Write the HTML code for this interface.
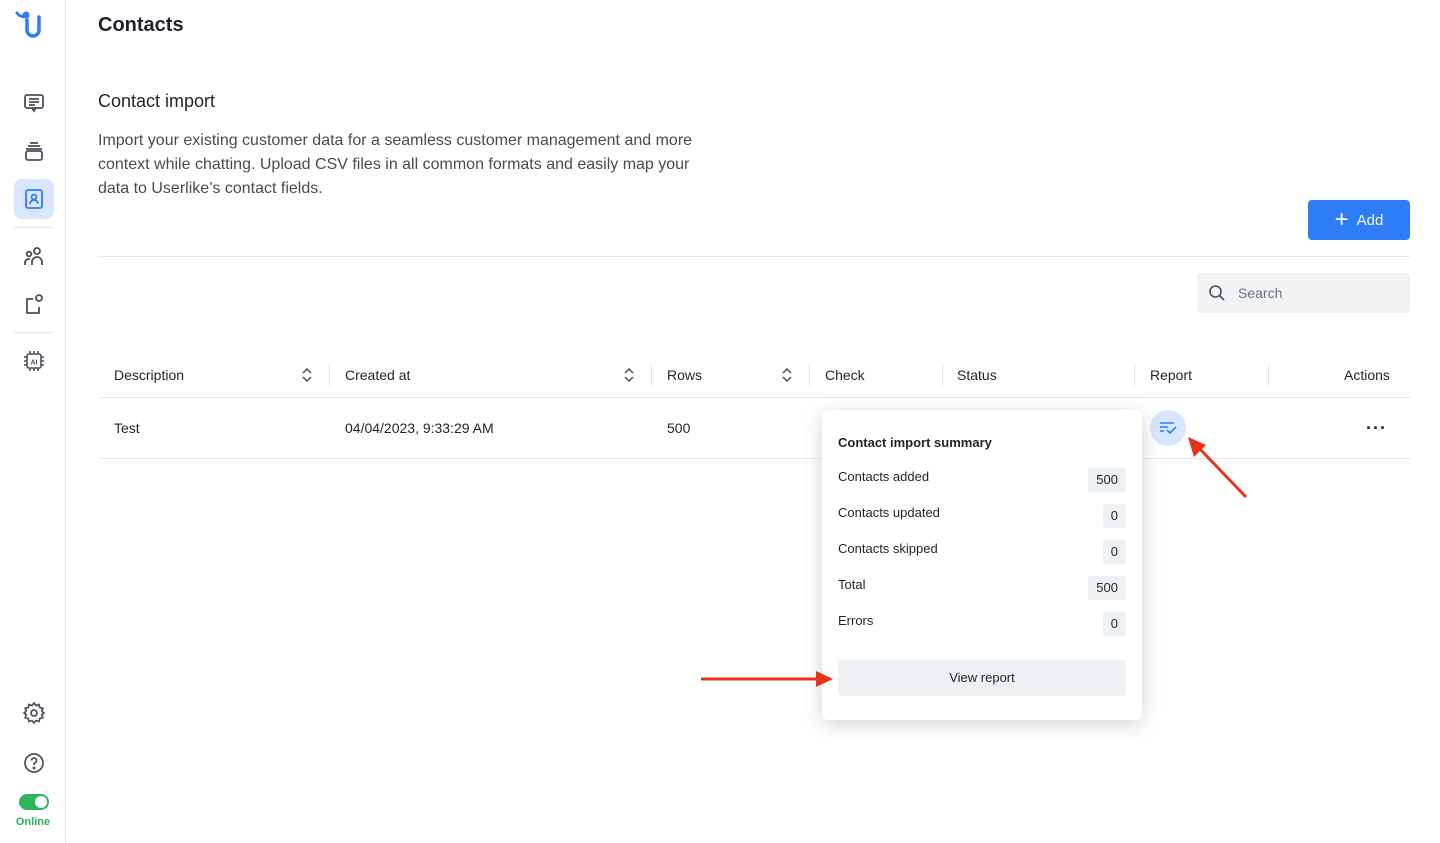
<!DOCTYPE html>
<html><head><style>
*{box-sizing:border-box;margin:0;padding:0}
body{width:1440px;height:843px;background:#fff;font-family:"Liberation Sans",sans-serif;color:#1f2329;position:relative;overflow:hidden}
.side{position:absolute;left:0;top:0;width:66px;height:843px;border-right:1px solid #e6e8eb;background:#fff}
.ic{position:absolute;left:14px;width:40px;height:40px;display:flex;align-items:center;justify-content:center}
.sep{position:absolute;left:14px;width:40px;height:1px;background:#e3e5e8}
.abs{position:absolute}
h1{position:absolute;left:98px;top:14px;font-size:20px;font-weight:bold;color:#1f2329}
h2{position:absolute;left:98px;top:91px;font-size:18px;font-weight:normal;color:#1f2329}
.desc{position:absolute;left:98px;top:129px;width:700px;font-size:16px;line-height:24px;color:#454b52}
.add{position:absolute;left:1308px;top:200px;width:102px;height:40px;background:#2e7cf6;border-radius:4px;color:#fff;font-size:15px;display:flex;align-items:center;justify-content:center;gap:8px}
.search{position:absolute;left:1197px;top:273px;width:213px;height:40px;background:#f0f2f4;border-radius:4px;color:#6b7178;font-size:14px;padding-left:41px;line-height:40px}
.th{position:absolute;top:367px;font-size:14px;color:#1f2329}
.vd{position:absolute;top:364px;width:1px;height:22px;background:#e3e5e8}
.hl{position:absolute;left:98px;width:1312px;height:1px;background:#e6e8eb}
.td{position:absolute;top:420px;font-size:14px;color:#1f2329}
.pop{position:absolute;left:822px;top:410px;width:320px;height:310px;background:#fff;border-radius:6px;box-shadow:0 4px 20px rgba(0,0,0,.18)}
.pop .r{position:absolute;left:16px;font-size:13px;color:#1f2329}
.badge{position:absolute;right:16px;height:24px;background:#eef1f4;border-radius:3px;font-size:13px;line-height:24px;padding:0 8px}
.vr{position:absolute;left:16px;top:250px;width:288px;height:36px;background:#eef1f4;border-radius:4px;font-size:13px;text-align:center;line-height:36px}
</style></head><body>
<div class="side">
 <svg class="abs" style="left:14px;top:10px" width="32" height="32" viewBox="0 0 32 32"><circle cx="12" cy="5" r="3.5" fill="#2e7cf6"/><path d="M3 3 Q7 8 12 6" stroke="#2e7cf6" stroke-width="3" fill="none" stroke-linecap="round"/><path d="M13 10 V20 a6 6 0 0 0 12 0 V7" stroke="#2e7cf6" stroke-width="3.5" fill="none" stroke-linecap="round"/></svg>
 <div class="ic" style="top:83px"><svg width="22" height="22" viewBox="0 0 22 22" fill="none" stroke="#4a5058" stroke-width="1.8"><rect x="2" y="3" width="18" height="13" rx="2"/><path d="M6 7h10M6 10h10M6 13h6M9 16l2 3 2-3"/></svg></div>
 <div class="ic" style="top:131px"><svg width="22" height="22" viewBox="0 0 22 22" fill="none" stroke="#4a5058" stroke-width="1.8"><path d="M7 3h8M5 6h12M3 9h16"/><rect x="3" y="11" width="16" height="9" rx="2"/></svg></div>
 <div class="ic" style="top:179px;background:#d8e7fd;border-radius:8px"><svg width="22" height="22" viewBox="0 0 22 22" fill="none" stroke="#2e7cf6" stroke-width="1.8"><rect x="3" y="2" width="16" height="18" rx="2"/><circle cx="11" cy="9" r="2.5"/><path d="M7 16a4 4 0 0 1 8 0"/></svg></div>
 <div class="sep" style="top:227px"></div>
 <div class="ic" style="top:236px"><svg width="22" height="22" viewBox="0 0 22 22" fill="none" stroke="#4a5058" stroke-width="1.8"><circle cx="14" cy="6" r="3"/><circle cx="6" cy="9" r="2.3"/><path d="M9 20v-3a5 5 0 0 1 10 0v3M2 20v-2a4 4 0 0 1 5-4"/></svg></div>
 <div class="ic" style="top:284px"><svg width="22" height="22" viewBox="0 0 22 22" fill="none" stroke="#4a5058" stroke-width="1.8"><path d="M10 6H4v14h12v-6"/><circle cx="16" cy="5" r="3"/></svg></div>
 <div class="sep" style="top:332px"></div>
 <div class="ic" style="top:341px"><svg width="22" height="22" viewBox="0 0 22 22" fill="none" stroke="#4a5058" stroke-width="1.6"><rect x="4" y="4" width="14" height="14" rx="2"/><path d="M7 1v3M11 1v3M15 1v3M7 18v3M11 18v3M15 18v3M1 7h3M1 11h3M1 15h3M18 7h3M18 11h3M18 15h3"/><text x="11" y="14.5" font-size="7" font-family="Liberation Sans" font-weight="bold" fill="#4a5058" stroke="none" text-anchor="middle">AI</text></svg></div>
 <div class="ic" style="top:693px"><svg width="24" height="24" viewBox="0 0 24 24" fill="none" stroke="#4a5058" stroke-width="1.7"><circle cx="12" cy="12" r="3"/><path d="M12 2l2 2.5 3-1 .8 3 3 .8-1 3L22 12l-2.2 1.7 1 3-3 .8-.8 3-3-1L12 22l-2-2.5-3 1-.8-3-3-.8 1-3L2 12l2.2-1.7-1-3 3-.8.8-3 3 1z"/></svg></div>
 <div class="ic" style="top:743px"><svg width="22" height="22" viewBox="0 0 22 22" fill="none" stroke="#4a5058" stroke-width="1.7"><circle cx="11" cy="11" r="9"/><path d="M8.5 8.5a2.5 2.5 0 1 1 3.5 2.3c-.7.3-1 .8-1 1.5v.7"/><circle cx="11" cy="16" r=".6" fill="#4a5058"/></svg></div>
 <div class="abs" style="left:19px;top:794px;width:30px;height:16px;border-radius:8px;background:#2fb45d"><div class="abs" style="right:2px;top:2px;width:12px;height:12px;border-radius:6px;background:#fff"></div></div>
 <div class="abs" style="left:0;width:66px;top:816px;text-align:center;font-size:11px;font-weight:bold;color:#2fb45d">Online</div>
</div>
<h1>Contacts</h1>
<h2>Contact import</h2>
<div class="desc">Import your existing customer data for a seamless customer management and more<br>context while chatting. Upload CSV files in all common formats and easily map your<br>data to Userlike’s contact fields.</div>
<div class="add"><span style="font-size:24px;font-weight:300;line-height:20px">+</span>Add</div>
<div class="hl" style="top:256px"></div>
<div class="search"><svg class="abs" style="left:11px;top:11px" width="18" height="18" viewBox="0 0 18 18" fill="none" stroke="#4a5058" stroke-width="1.6"><circle cx="7.5" cy="7.5" r="5.5"/><path d="M11.5 11.5L16 16"/></svg>Search</div>
<div class="th" style="left:114px">Description</div>
<div class="th" style="left:345px">Created at</div>
<div class="th" style="left:667px">Rows</div>
<div class="th" style="left:825px">Check</div>
<div class="th" style="left:957px">Status</div>
<div class="th" style="left:1150px">Report</div>
<div class="th" style="left:1344px">Actions</div>
<svg class="abs" style="left:301px;top:368px" width="12" height="14" viewBox="0 0 12 14" fill="none" stroke="#4a5058" stroke-width="1.5"><path d="M2 5l4-4 4 4M2 9l4 4 4-4"/></svg>
<svg class="abs" style="left:623px;top:368px" width="12" height="14" viewBox="0 0 12 14" fill="none" stroke="#4a5058" stroke-width="1.5"><path d="M2 5l4-4 4 4M2 9l4 4 4-4"/></svg>
<svg class="abs" style="left:781px;top:368px" width="12" height="14" viewBox="0 0 12 14" fill="none" stroke="#4a5058" stroke-width="1.5"><path d="M2 5l4-4 4 4M2 9l4 4 4-4"/></svg>
<div class="vd" style="left:329px"></div><div class="vd" style="left:651px"></div><div class="vd" style="left:809px"></div><div class="vd" style="left:942px"></div><div class="vd" style="left:1134px"></div><div class="vd" style="left:1268px"></div>
<div class="hl" style="top:397px"></div>
<div class="hl" style="top:458px"></div>
<div class="td" style="left:114px">Test</div>
<div class="td" style="left:345px">04/04/2023, 9:33:29 AM</div>
<div class="td" style="left:667px">500</div>
<div class="abs" style="left:1150px;top:410px;width:36px;height:36px;border-radius:18px;background:#d8e7fd"><svg class="abs" style="left:9px;top:10px" width="18" height="16" viewBox="0 0 18 16" fill="none" stroke="#2e7cf6" stroke-width="1.6"><path d="M1 3h14M1 7h8M1 11h4M8 10l3 3 6-6"/></svg></div>
<div class="abs" style="left:1366px;top:418px;font-size:18px;font-weight:bold;letter-spacing:1px">···</div>
<div class="pop">
 <div class="r" style="top:25px;font-size:13px;font-weight:bold">Contact import summary</div>
 <div class="r" style="top:59px">Contacts added</div><div class="badge" style="top:58px">500</div>
 <div class="r" style="top:95px">Contacts updated</div><div class="badge" style="top:94px">0</div>
 <div class="r" style="top:131px">Contacts skipped</div><div class="badge" style="top:130px">0</div>
 <div class="r" style="top:167px">Total</div><div class="badge" style="top:166px">500</div>
 <div class="r" style="top:203px">Errors</div><div class="badge" style="top:202px">0</div>
 <div class="vr">View report</div>
</div>
<svg class="abs" style="left:0;top:0" width="1440" height="843" pointer-events="none"><path d="M701 679H818" stroke="#e8331c" stroke-width="3"/><path d="M833 679l-17-8v16z" fill="#e8331c"/><path d="M1246 497L1198 447" stroke="#e8331c" stroke-width="3"/><path d="M1188 437l6 20 12-12z" fill="#e8331c"/></svg>
</body></html>
